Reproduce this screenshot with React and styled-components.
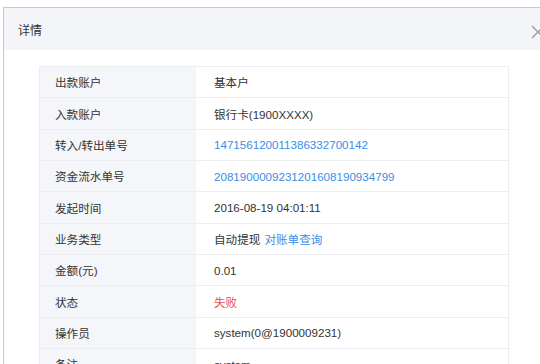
import React from "react";
import styled, { createGlobalStyle } from "styled-components";

const Global = createGlobalStyle`
  html, body { margin: 0; padding: 0; background: #fff; overflow: hidden; }
  body { font-family: "Liberation Sans", "Noto Sans CJK SC", sans-serif; color: #333; }
`;

const Dialog = styled.div`
  margin: 7px 0 0 3px;
  width: 560px;
  height: 400px;
  border-top: 1px solid #c8c8c8;
  border-left: 1px solid #c8c8c8;
  background: #fff;
`;

const Header = styled.div`
  height: 42px;
  background: #f4f5f8;
  display: flex;
  align-items: center;
  padding-left: 14px;
  box-sizing: border-box;
  font-size: 12px;
  color: #333;
  position: relative;
`;

const Close = styled.svg`
  position: absolute;
  left: 527px;
  top: 17px;
`;

const Body = styled.div`
  padding: 16px 0 0 35px;
`;

const Table = styled.div`
  width: 470px;
  border: 1px solid #eceef2;
  border-bottom: none;
  box-sizing: border-box;
`;

const Row = styled.div`
  display: grid;
  grid-template-columns: 156px 1fr;
  height: 31.35px;
  border-bottom: 1px solid #eceef2;
  box-sizing: border-box;
  font-size: 11.6px;
`;

const Label = styled.div`
  background: #f5f6f9;
  display: flex;
  align-items: center;
  padding-left: 15px;
  color: #333;
`;

const Value = styled.div`
  display: flex;
  align-items: center;
  padding-left: 18px;
  color: ${(p) => (p.$tone === "link" ? "#3a8ee6" : p.$tone === "error" ? "#e5505c" : "#333")};
  white-space: nowrap;
`;

const Link = styled.span`
  color: #3a8ee6;
  margin-left: 4px;
`;

const rows = [
  ["出款账户", "基本户"],
  ["入款账户", "银行卡(1900XXXX)"],
  ["转入/转出单号", "147156120011386332700142", "link"],
  ["资金流水单号", "2081900009231201608190934799", "link"],
  ["发起时间", "2016-08-19 04:01:11"],
  ["业务类型", "自动提现", null, "对账单查询"],
  ["金额(元)", "0.01"],
  ["状态", "失败", "error"],
  ["操作员", "system(0@1900009231)"],
  ["备注", "system"],
];

export default function App() {
  return (
    <>
      <Global />
      <Dialog>
        <Header>
          详情
          <Close width="14" height="14" viewBox="0 0 14 14">
            <path d="M1 1 L13 13 M13 1 L1 13" stroke="#9a9a9a" strokeWidth="1.3" fill="none" />
          </Close>
        </Header>
        <Body>
          <Table>
            {rows.map(([label, value, tone, extra]) => (
              <Row key={label}>
                <Label>{label}</Label>
                <Value $tone={tone}>
                  {value}
                  {extra && <Link>{extra}</Link>}
                </Value>
              </Row>
            ))}
          </Table>
        </Body>
      </Dialog>
    </>
  );
}
